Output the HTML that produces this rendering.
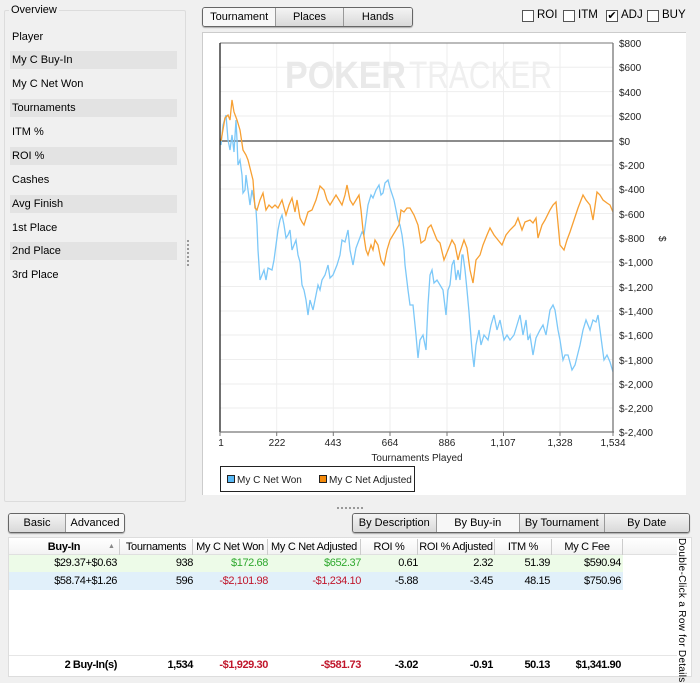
<!DOCTYPE html>
<html><head><meta charset="utf-8"><style>
*{margin:0;padding:0;box-sizing:border-box}
body{width:700px;height:681px;background:#f0f0f0;font-family:"Liberation Sans",sans-serif;font-size:11px;color:#000;position:relative;overflow:hidden}
.a{position:absolute}
.grp{left:4px;top:10px;width:182px;height:492px;border:1px solid #dcdcdc;border-radius:2px}
.lbl{left:9px;top:4px;background:#f0f0f0;padding:0 2px;font-size:11px}
.row{left:10px;width:167px;height:18px;line-height:18px;padding-left:2px;font-size:11px}
.band{background:#e3e3e3}
.seg{position:absolute;display:flex;border:1px solid #666;border-radius:3px;overflow:hidden;box-shadow:0 1px 1px #aaa}
.seg div{height:100%;text-align:center;background:linear-gradient(#f4f4f4,#d9d9d9);border-right:1px solid #999;font-size:11px}
.seg div:last-child{border-right:none}
.seg .on{background:#f7f7f7}
.cb{width:12px;height:12px;border:1px solid #555;background:#fff;top:10px}
.cbl{top:9px;font-size:11.5px}
.tbl{left:8px;top:537px;width:684px;height:140px;background:#fff;border:1px solid #ddd}
.c{position:absolute;text-align:right;font-size:11px;letter-spacing:-0.4px;white-space:nowrap}
.h{position:absolute;top:1px;height:16px;line-height:16px;text-align:center;border-right:1px solid #ccc;font-size:11px;letter-spacing:-0.3px;white-space:nowrap}
.g{color:#2fa82f}.r{color:#c0162b}
</style></head><body>

<div class="a grp"></div>
<div class="a lbl">Overview</div>
<div class="a row" style="top:28px">Player</div>
<div class="a row band" style="top:51px">My C Buy-In</div>
<div class="a row" style="top:75px">My C Net Won</div>
<div class="a row band" style="top:99px">Tournaments</div>
<div class="a row" style="top:123px">ITM %</div>
<div class="a row band" style="top:147px">ROI %</div>
<div class="a row" style="top:171px">Cashes</div>
<div class="a row band" style="top:195px">Avg Finish</div>
<div class="a row" style="top:219px">1st Place</div>
<div class="a row band" style="top:242px">2nd Place</div>
<div class="a row" style="top:266px">3rd Place</div>
<div class="a" style="left:187px;top:240px;width:2px;height:26px;border-left:2px dotted #999"></div>

<div class="seg" style="left:202px;top:7px;width:211px;height:20px">
<div class="on" style="width:74px;line-height:18px">Tournament</div>
<div style="width:68px;line-height:18px">Places</div>
<div style="width:69px;line-height:18px">Hands</div></div>

<div class="a cb" style="left:522px"></div><div class="a cbl" style="left:537px">ROI</div>
<div class="a cb" style="left:563px"></div><div class="a cbl" style="left:578px">ITM</div>
<div class="a cb" style="left:606px;font-size:11px;line-height:10px;text-align:center">✔</div><div class="a cbl" style="left:621px">ADJ</div>
<div class="a cb" style="left:647px"></div><div class="a cbl" style="left:662px">BUY</div>

<div class="a" style="left:202px;top:32px;width:484px;height:463px;background:#fff;border-top:1px solid #ccc;border-left:1px solid #ccc"></div>
<svg class="a" style="left:0;top:0" width="700" height="500" xmlns="http://www.w3.org/2000/svg">
<g stroke="#eeeeee" stroke-width="1">
<line x1="276.7" y1="43" x2="276.7" y2="432"/><line x1="333.3" y1="43" x2="333.3" y2="432"/><line x1="390" y1="43" x2="390" y2="432"/><line x1="447" y1="43" x2="447" y2="432"/><line x1="503.5" y1="43" x2="503.5" y2="432"/><line x1="560" y1="43" x2="560" y2="432"/>
<line x1="220" y1="67.3" x2="613" y2="67.3"/><line x1="220" y1="91.6" x2="613" y2="91.6"/><line x1="220" y1="116" x2="613" y2="116"/><line x1="220" y1="165" x2="613" y2="165"/><line x1="220" y1="189" x2="613" y2="189"/><line x1="220" y1="213.5" x2="613" y2="213.5"/><line x1="220" y1="238" x2="613" y2="238"/><line x1="220" y1="262" x2="613" y2="262"/><line x1="220" y1="286.5" x2="613" y2="286.5"/><line x1="220" y1="311" x2="613" y2="311"/><line x1="220" y1="335" x2="613" y2="335"/><line x1="220" y1="359.5" x2="613" y2="359.5"/><line x1="220" y1="384" x2="613" y2="384"/><line x1="220" y1="408" x2="613" y2="408"/>
</g>
<text x="285" y="88" font-family="Liberation Sans" font-size="38" fill="#e9e9e9" font-weight="bold" textLength="121" lengthAdjust="spacingAndGlyphs">POKER</text>
<text x="409" y="88" font-family="Liberation Sans" font-size="38" fill="#efefef" textLength="143" lengthAdjust="spacingAndGlyphs">TRACKER</text>
<line x1="220" y1="43" x2="613" y2="43" stroke="#777"/>
<line x1="220" y1="141" x2="613" y2="141" stroke="#666" stroke-width="1.5"/>
<polyline fill="none" stroke="#7cc8f8" stroke-width="1.3" points="221,145 223,125 226,115 228,140 230,150 232,135 234,152 236,120 237,140 238,165 240,160 242,175 243,193 245,190 246,175 248,190 250,205 252,190 254,200 256,210 257,225 258,250 259,265 260,280 262,275 264,270 266,280 268,268 272,270 274,260 276,245 278,230 280,220 282,215 284,225 286,238 288,235 290,230 292,250 294,245 296,240 298,255 300,262 302,285 304,290 306,300 308,315 310,300 313,310 316,295 318,285 320,290 322,280 325,275 328,265 330,278 333,275 335,270 337,265 340,255 342,240 345,242 348,230 350,250 353,265 356,248 359,240 362,232 364,235 366,220 368,205 371,195 373,198 376,190 379,185 381,195 383,193 385,183 388,180 390,188 394,200 396,210 398,220 400,225 402,235 404,250 405,265 408,290 410,305 413,305 416,335 418,358 420,340 423,335 426,350 428,305 430,275 432,270 434,283 437,280 440,285 443,290 446,315 448,290 450,285 452,265 454,260 456,280 458,270 460,280 462,255 463,255 465,270 467,290 469,312 472,350 474,367 476,345 479,330 481,345 484,335 488,340 491,325 494,315 497,330 500,320 504,340 507,335 510,340 514,335 517,325 520,315 523,335 526,320 528,340 530,335 533,355 536,338 540,330 543,325 546,335 550,310 553,305 555,310 558,330 560,340 563,360 565,355 568,355 572,370 575,365 578,353 580,345 583,330 586,320 588,325 590,330 593,320 596,322 598,315 600,330 602,345 604,360 607,355 610,362 613,372"/>
<polyline fill="none" stroke="#f7a033" stroke-width="1.3" points="221,141 225,118 228,115 230,120 232,100 234,112 237,120 240,130 243,150 246,155 248,160 250,168 253,180 255,208 257,210 260,200 263,193 266,210 269,205 272,208 275,205 278,208 282,200 286,215 289,205 292,198 295,212 297,200 300,218 302,222 304,225 308,212 312,210 316,200 320,186 324,190 327,200 330,205 333,200 336,195 339,200 342,205 345,195 347,185 350,200 353,205 356,200 359,195 361,210 363,230 366,250 368,255 371,245 373,250 375,240 378,245 381,260 384,265 387,250 390,240 393,235 396,230 399,225 401,210 404,212 407,208 410,208 414,215 418,225 421,243 425,240 428,228 431,225 433,230 437,240 440,243 444,260 448,250 452,240 455,245 458,260 460,252 464,240 467,248 470,270 473,283 476,260 480,255 483,245 487,235 490,228 494,235 498,240 502,245 506,235 510,230 515,225 518,218 522,230 525,222 530,220 533,223 536,218 538,238 542,225 545,220 550,210 553,205 556,202 560,245 564,250 567,240 570,232 574,220 578,208 583,195 586,200 590,205 593,220 597,192 600,195 603,200 607,203 610,205 613,212"/>
<line x1="220" y1="43" x2="220" y2="432" stroke="#222" stroke-width="1.3"/>
<line x1="220" y1="432" x2="614" y2="432" stroke="#777" stroke-width="1.3"/>
<line x1="613" y1="43" x2="613" y2="432" stroke="#777" stroke-width="1.3"/>
<g stroke="#777"><line x1="220" y1="432" x2="220" y2="436"/><line x1="276.7" y1="432" x2="276.7" y2="436"/><line x1="333.3" y1="432" x2="333.3" y2="436"/><line x1="390" y1="432" x2="390" y2="436"/><line x1="447" y1="432" x2="447" y2="436"/><line x1="503.5" y1="432" x2="503.5" y2="436"/><line x1="560" y1="432" x2="560" y2="436"/><line x1="613" y1="432" x2="613" y2="436"/></g>
<g font-family="Liberation Sans" font-size="10" fill="#222">
<text x="619" y="47">$800</text><text x="619" y="71">$600</text><text x="619" y="96">$400</text><text x="619" y="120">$200</text><text x="619" y="145">$0</text><text x="619" y="169">$-200</text><text x="619" y="193">$-400</text><text x="619" y="218">$-600</text><text x="619" y="242">$-800</text><text x="619" y="266">$-1,000</text><text x="619" y="291">$-1,200</text><text x="619" y="315">$-1,400</text><text x="619" y="339">$-1,600</text><text x="619" y="364">$-1,800</text><text x="619" y="388">$-2,000</text><text x="619" y="412">$-2,200</text><text x="619" y="436">$-2,400</text>
<g text-anchor="middle"><text x="221" y="446">1</text><text x="277" y="446">222</text><text x="333" y="446">443</text><text x="390" y="446">664</text><text x="447" y="446">886</text><text x="503" y="446">1,107</text><text x="560" y="446">1,328</text><text x="613" y="446">1,534</text>
<text x="417" y="461">Tournaments Played</text></g>
<text x="0" y="0" transform="translate(659,236) rotate(90)">$</text>
</g>
<rect x="220.5" y="466.5" width="194" height="25" fill="#fff" stroke="#222"/>
<rect x="227.5" y="475.5" width="7" height="7" fill="#58b8f5" stroke="#222"/>
<rect x="319.5" y="475.5" width="7" height="7" fill="#f58a0a" stroke="#222"/>
<g font-family="Liberation Sans" font-size="10" fill="#222"><text x="237" y="483">My C Net Won</text><text x="329" y="483">My C Net Adjusted</text></g>
</svg>

<div class="a" style="left:337px;top:507px;width:26px;border-top:2px dotted #999"></div>

<div class="seg" style="left:8px;top:513px;width:117px;height:20px">
<div style="width:58px;line-height:18px">Basic</div>
<div class="on" style="width:59px;line-height:18px">Advanced</div></div>
<div class="seg" style="left:352px;top:513px;width:338px;height:20px">
<div style="width:84px;line-height:18px">By Description</div>
<div class="on" style="width:84px;line-height:18px">By Buy-in</div>
<div style="width:85px;line-height:18px">By Tournament</div>
<div style="width:85px;line-height:18px">By Date</div></div>

<div class="a tbl"></div>
<div class="a" style="left:9px;top:538px;width:668px;height:17px;background:linear-gradient(#fff,#f3f3f3);border-bottom:1px solid #e0e0e0"></div>
<div class="h" style="left:9px;top:539px;width:111px;font-weight:bold">Buy-In<span style="position:absolute;left:99px;top:0;font-size:7px;color:#888">▲</span></div>
<div class="h" style="left:120px;top:539px;width:73px">Tournaments</div>
<div class="h" style="left:193px;top:539px;width:75px">My C Net Won</div>
<div class="h" style="left:268px;top:539px;width:93px">My C Net Adjusted</div>
<div class="h" style="left:361px;top:539px;width:57px">ROI %</div>
<div class="h" style="left:418px;top:539px;width:77px">ROI % Adjusted</div>
<div class="h" style="left:495px;top:539px;width:57px">ITM %</div>
<div class="h" style="left:552px;top:539px;width:71px">My C Fee</div>

<div class="a" style="left:9px;top:555px;width:614px;height:17px;background:#edfbe8"></div>
<div class="a" style="left:9px;top:572px;width:614px;height:18px;background:#e1f0fa"></div>
<div class="a" style="left:9px;top:655px;width:668px;border-top:1px solid #e6e6e6"></div>

<div class="c" style="right:583px;top:557px">$29.37+$0.63</div>
<div class="c" style="right:507px;top:557px">938</div>
<div class="c g" style="right:432px;top:557px">$172.68</div>
<div class="c g" style="right:339px;top:557px">$652.37</div>
<div class="c" style="right:282px;top:557px">0.61</div>
<div class="c" style="right:207px;top:557px">2.32</div>
<div class="c" style="right:150px;top:557px">51.39</div>
<div class="c" style="right:79px;top:557px">$590.94</div>

<div class="c" style="right:583px;top:575px">$58.74+$1.26</div>
<div class="c" style="right:507px;top:575px">596</div>
<div class="c r" style="right:432px;top:575px">-$2,101.98</div>
<div class="c r" style="right:339px;top:575px">-$1,234.10</div>
<div class="c" style="right:282px;top:575px">-5.88</div>
<div class="c" style="right:207px;top:575px">-3.45</div>
<div class="c" style="right:150px;top:575px">48.15</div>
<div class="c" style="right:79px;top:575px">$750.96</div>

<div class="c" style="right:583px;top:659px;font-weight:bold">2 Buy-In(s)</div>
<div class="c" style="right:507px;top:659px;font-weight:bold">1,534</div>
<div class="c r" style="right:432px;top:659px;font-weight:bold">-$1,929.30</div>
<div class="c r" style="right:339px;top:659px;font-weight:bold">-$581.73</div>
<div class="c" style="right:282px;top:659px;font-weight:bold">-3.02</div>
<div class="c" style="right:207px;top:659px;font-weight:bold">-0.91</div>
<div class="c" style="right:150px;top:659px;font-weight:bold">50.13</div>
<div class="c" style="right:79px;top:659px;font-weight:bold">$1,341.90</div>

<div class="a" style="left:687px;top:538px;transform-origin:0 0;transform:rotate(90deg);font-size:10px;white-space:nowrap;letter-spacing:0.3px">Double-Click a Row for Details</div>
</body></html>
